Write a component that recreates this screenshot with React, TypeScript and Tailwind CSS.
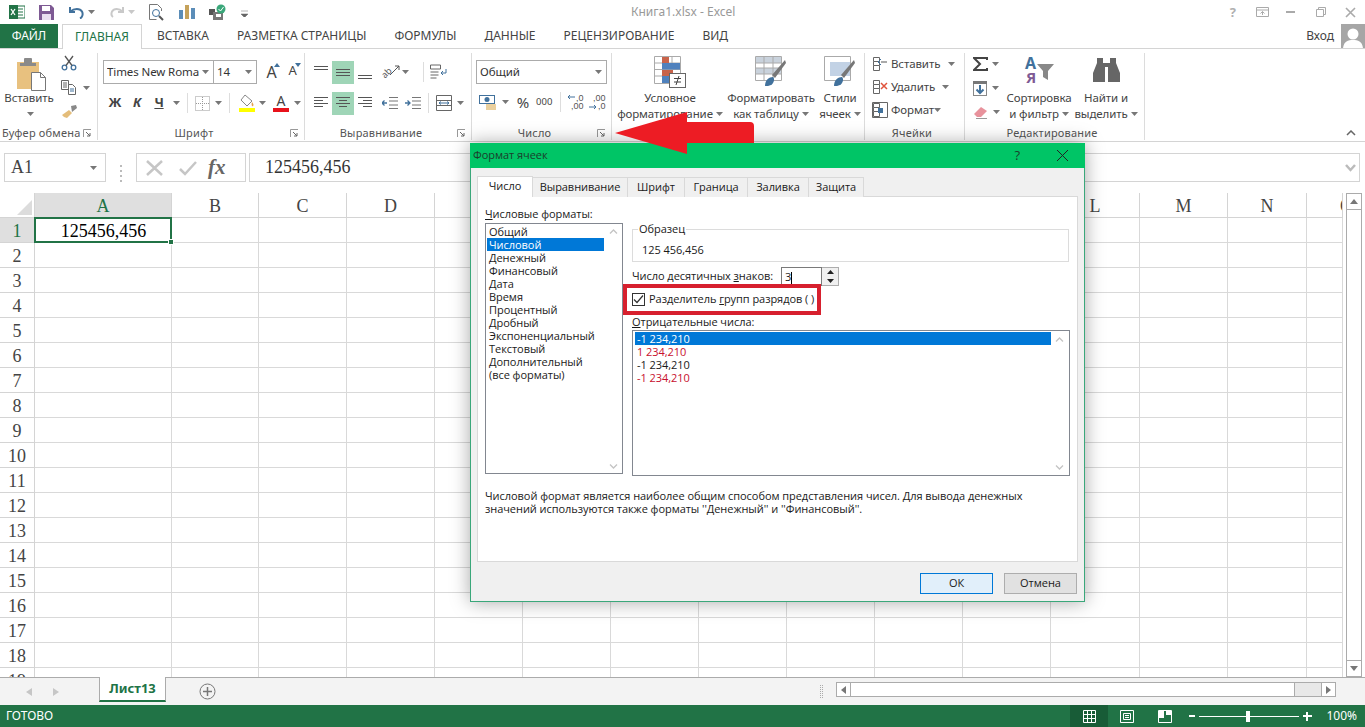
import React from "react";

const Caret = ({ className = "" }: { className?: string }) => (
  <svg width="7" height="4" viewBox="0 0 7 4" className={"shrink-0 " + className}><path d="M0 0h7L3.5 4z" fill="#777" /></svg>
);

const Lines = ({ w, rows, bg = "#555" }: { w: number; rows: [number, number, number][]; bg?: string }) => (
  <svg width={w} height="16" viewBox={`0 0 ${w} 16`} className="shrink-0">
    {rows.map(([x, y, l], i) => <rect key={i} x={x} y={y} width={l} height="1" fill={bg} />)}
  </svg>
);

const Dlauncher = () => (
  <svg width="9" height="9" viewBox="0 0 9 9" className="shrink-0">
    <path d="M.5 8V.5H8" fill="none" stroke="#999" />
    <path d="M3 3l4 4M7 4v3H4" fill="none" stroke="#666" />
  </svg>
);

function Group({ w, label, children, center = true, launcher = false, border = true }: { w: number; label: string; children: React.ReactNode; center?: boolean; launcher?: boolean; border?: boolean }) {
  return (
    <div className={"flex flex-col shrink-0 h-[87px] " + (border ? "border-r border-[#dcdcdc]" : "")} style={{ width: w }}>
      <div className="h-[74px] shrink-0">{children}</div>
      <div className="flex items-center h-[12px] pr-[5px] text-[11px] text-[#555] tracking-[0.2px] whitespace-nowrap">
        <span className={center ? "flex-1 text-center" : "flex-1 pl-[2px]"}>{label}</span>
        {launcher && <Dlauncher />}
      </div>
    </div>
  );
}

const Row = ({ className = "", children }: { className?: string; children: React.ReactNode }) => (
  <div className={"flex items-center " + className}>{children}</div>
);

const Clipboard = () => (
  <svg width="30" height="34" viewBox="0 0 30 34">
    <rect x="0" y="5" width="22" height="27" fill="#e8c17f" />
    <rect x="7" y="1" width="8" height="7" rx="1" fill="#8a8a8a" />
    <rect x="3" y="6" width="16" height="3" fill="#8a8a8a" />
    <path d="M14.5 15.5h9l5 5v13h-14z" fill="#fff" stroke="#777" />
    <path d="M23.5 15.5v5h5" fill="none" stroke="#777" />
  </svg>
);

const Scissors = () => (
  <svg width="16" height="16" viewBox="0 0 16 16" fill="none" stroke="#41719c" strokeWidth="1.3">
    <circle cx="3.5" cy="12.5" r="2.3" /><circle cx="12.5" cy="12.5" r="2.3" />
    <path d="M5 10.5L12 1M11 10.5L4 1" stroke="#555" />
  </svg>
);
const CopyIc = () => (
  <svg width="16" height="15" viewBox="0 0 16 15" fill="none" stroke="#666">
    <path d="M.5.5h7v9h-7zM2 3h4M2 5h4M2 7h4" /><path d="M7.5 4.5h4l3 3v7h-7z" fill="#fff" /><path d="M9 9h4M9 11h4" stroke="#41719c" />
  </svg>
);
const Painter = () => (
  <svg width="17" height="15" viewBox="0 0 17 15"><path d="M10 2l5 -1 1 3-5 4z" fill="#888" /><path d="M1 11l7-5 3 3-5 5-3-1z" fill="#e4bd7a" /></svg>
);
const AUp = ({ big }: { big: boolean }) => (
  <span className="relative flex w-[17px] justify-center text-[#444] leading-none" style={{ fontSize: big ? 16 : 13 }}>
    A<svg width="6" height="4" viewBox="0 0 6 4" className="absolute right-0 top-[-1px]"><path d={big ? "M0 4h6L3 0z" : "M0 0h6L3 4z"} fill="#41719c" /></svg>
  </span>
);
const BordersIc = () => (
  <svg width="15" height="15" viewBox="0 0 15 15" fill="none" stroke="#999" strokeDasharray="1 1"><path d="M.5.5h14v14H.5zM7.5 1v13M1 7.5h13" /></svg>
);
const FillIc = () => (
  <svg width="16" height="18" viewBox="0 0 16 18">
    <path d="M6 1l7 6-5 5-6-6z" fill="#fff" stroke="#888" /><path d="M13 8c1.5 2 2 3 1 4s-2-1-1-4z" fill="#e4a050" />
    <rect x="0" y="14" width="16" height="4" fill="#ffff00" />
  </svg>
);
const FontColorIc = () => (
  <span className="flex flex-col items-center w-[16px]">
    <span className="text-[14px] leading-[14px] text-[#444]">A</span>
    <span className="h-[4px] w-[16px] bg-[#e8121b]" />
  </span>
);
const WrapIc = () => (
  <svg width="18" height="16" viewBox="0 0 18 16" fill="none" stroke="#666"><path d="M.5 1h10v4H.5zM.5 8h8M.5 11h8M.5 14h6" /><path d="M16 5v4h-5M13 7l-2 2 2 2" stroke="#41719c" /></svg>
);
const MergeIc = () => (
  <svg width="16" height="16" viewBox="0 0 16 16" fill="none" stroke="#666"><path d="M.5.5h15v15H.5zM1 5.5h14M1 10.5h14" /><path d="M3 8h10M3 8l2-1.5M3 8l2 1.5M13 8l-2-1.5M13 8l-2 1.5" stroke="#41719c" /></svg>
);
const OrientIc = () => (
  <span className="relative flex w-[19px] h-[16px] items-center">
    <span className="-rotate-45 text-[9px] leading-none text-[#555] tracking-normal">ab</span>
    <svg width="11" height="11" viewBox="0 0 11 11" fill="none" stroke="#555" className="absolute right-0 top-[1px]"><path d="M1 10l9-9M6 1h4v4" /></svg>
  </span>
);
const MoneyIc = () => (
  <svg width="19" height="15" viewBox="0 0 19 15"><rect x=".5" y=".5" width="15" height="8" fill="#fff" stroke="#41719c" /><circle cx="8" cy="4.5" r="2.5" fill="#41719c" /><path d="M7 10h10M7 12h10M7 14h10" stroke="#d6a13c" /></svg>
);
const DecIc = ({ flip }: { flip?: boolean }) => (
  <span className="relative flex flex-col items-end w-[17px] text-[9px] leading-[8px] text-[#555] tracking-normal" style={{ fontFamily: "'Liberation Sans',sans-serif" }}>
    <span>{flip ? ",00" : ",0"}</span><span>{flip ? ",0" : ",00"}</span>
    <svg width="8" height="6" viewBox="0 0 8 6" className={"absolute left-0 " + (flip ? "bottom-0" : "top-0")}><path d={flip ? "M0 3h7M5 1l2 2-2 2" : "M8 3H1M3 1L1 3l2 2"} fill="none" stroke="#41719c" /></svg>
  </span>
);
const CondIc = () => (
  <svg width="32" height="32" viewBox="0 0 32 32">
    <path d="M.5.5h26v27H.5zM9 1v26M18 1v26M1 7h25M1 13.5h25M1 20h25" fill="none" stroke="#aaa" />
    <rect x="8" y="1" width="7" height="6" fill="#c8634a" /><rect x="8" y="7" width="18" height="6.5" fill="#4f81bd" /><rect x="8" y="14" width="11" height="6" fill="#c8634a" /><rect x="8" y="20" width="7" height="7" fill="#4f81bd" />
    <rect x="15.5" y="17.5" width="16" height="14" fill="#fff" stroke="#666" /><path d="M20 22.5h7M20 26h7M25 20l-3 9" fill="none" stroke="#444" />
  </svg>
);
const TableIc = ({ light }: { light?: boolean }) => (
  <svg width="32" height="32" viewBox="0 0 32 32">
    <path d="M.5.5h26v24H.5z" fill="#fff" stroke="#aaa" />
    {light ? <rect x="6" y="6" width="20" height="14" fill="#c2d2e5" /> : <path d="M1 1h25v6H1zM1 12h25v6H1z" fill="#c9d2dc" />}
    {!light && <path d="M9 1v23M18 1v23M1 7h25M1 12h25M1 18h25" stroke="#aaa" />}
    <path d="M17 19L30 4l1 3-11 15z" fill="#777" /><path d="M10 30c0-6 4-9 8-9 2 2 1 6-2 8-2 1-4 1-6 1z" fill="#41719c" />
  </svg>
);
const InsIc = ({ kind }: { kind: number }) => (
  <svg width="16" height="16" viewBox="0 0 16 16" fill="none" stroke="#666">
    <path d="M1.5 1.5h6v4h-6zM1.5 5.5v4h6v-4M1.5 9.5v5h6v-5" />
    {kind === 0 && <><path d="M9 6H15" stroke="#aaa" strokeWidth="2" /><path d="M9 3L6 6l3 3" stroke="#41719c" /></>}
    {kind === 1 && <path d="M9 4l6 6M15 4l-6 6" stroke="#e0533c" strokeWidth="1.5" />}
    {kind === 2 && <><path d="M.5.5h15v15H.5z" /><rect x="6" y="6" width="5" height="5" fill="#41719c" stroke="none" /></>}
  </svg>
);
const SortIc = () => (
  <svg width="32" height="30" viewBox="0 0 32 30"><path d="M14 8h17l-6 7v9l-5-3v-6z" fill="#888" /></svg>
);
const Bino = () => (
  <svg width="27" height="24" viewBox="0 0 27 24" fill="#666"><path d="M4 0h6v5h7V0h6v5l4 10v9H15V9h-3v15H0v-9L4 5z" /><path d="M13 9h1v4h-1z" fill="#fff" /></svg>
);
const Sigma = () => (
  <svg width="15" height="14" viewBox="0 0 15 14"><path d="M14 3V1H1l6 6-6 6h13v-2" fill="none" stroke="#444" strokeWidth="2" /></svg>
);
const FillDown = () => (
  <svg width="14" height="15" viewBox="0 0 14 15"><rect x=".5" y=".5" width="13" height="14" fill="#fff" stroke="#888" /><rect x="0" y="0" width="14" height="3" fill="#777" /><path d="M7 4v8M3.5 8.5L7 12l3.5-3.5" fill="none" stroke="#41719c" strokeWidth="2" /></svg>
);
const Eraser = () => (
  <svg width="15" height="13" viewBox="0 0 15 13"><path d="M1 8l7-7 6 4-6 6H4z" fill="#e8929c" /><path d="M3 12.5h11" stroke="#999" /></svg>
);

const TABS = ["ВСТАВКА", "РАЗМЕТКА СТРАНИЦЫ", "ФОРМУЛЫ", "ДАННЫЕ", "РЕЦЕНЗИРОВАНИЕ", "ВИД"];

function TopBars() {
  return (
    <>
      <div className="h-[24px] relative flex items-center shrink-0">
        <div className="flex items-center pl-[9px] gap-[14px]">
          <svg width="16" height="14" viewBox="0 0 16 14"><rect x="6" y="1" width="10" height="12" fill="#fff" stroke="#217346" /><path d="M9 4h5M9 7h5M9 10h5" stroke="#217346" /><rect width="9" height="14" fill="#217346" /><path d="M2 4l4 6M6 4l-4 6" stroke="#fff" strokeWidth="1.3" /></svg>
          <svg width="15" height="15" viewBox="0 0 15 15"><path d="M0 0h12l3 3v12H0z" fill="#7e5a94" /><rect x="3" y="1" width="8" height="5" fill="#fff" /><rect x="3" y="9" width="9" height="6" fill="#eadff0" /></svg>
          <Row className="gap-[4px] ml-[1px]">
            <svg width="15" height="13" viewBox="0 0 15 13" fill="none"><path d="M1 1v5h5M1.500 5.500C5 2 11 2 13 5.500c1.500 3 0 6-2 7" stroke="#41719c" strokeWidth="2" /></svg>
            <Caret />
          </Row>
          <Row className="gap-[4px] ml-[1px]">
            <svg width="14" height="12" viewBox="0 0 14 12" fill="none"><path d="M13 1v5H8M12.500 5.500C9 2 4 2 2 5.500 1 8 1.500 10 3 11" stroke="#c9c9c9" strokeWidth="2" /></svg>
            <Caret className="opacity-40" />
          </Row>
          <svg width="16" height="17" viewBox="0 0 16 17" fill="none" stroke="#777"><path d="M.5.5h8l4 4V7M.5.5v15h7" /><circle cx="7" cy="9" r="3.500" stroke="#41719c" /><path d="M10 12l4 4" stroke="#555" strokeWidth="2" /></svg>
          <svg width="16" height="14" viewBox="0 0 16 14"><rect x="0" y="5" width="4" height="9" fill="#5b8db8" /><rect x="6" y="0" width="4" height="14" fill="#c5a25b" /><rect x="12" y="3" width="4" height="11" fill="#5b8db8" /></svg>
          <svg width="18" height="17" viewBox="0 0 18 17"><rect x="0" y="5" width="6" height="6" fill="#555" /><rect x="4" y="8" width="10" height="8" fill="#777" /><rect x="7" y="10" width="5" height="3" fill="#fff" /><circle cx="12" cy="5" r="4.500" fill="#3aa77a" /><path d="M9.500 5l2 2 3-4" stroke="#fff" fill="none" /></svg>
          <svg width="7" height="7" viewBox="0 0 7 7" className="mt-[2px]"><path d="M0 1h7M0 4h7L3.500 7.500z" fill="#666" stroke="#666" strokeWidth=".5" /></svg>
        </div>
        <span className="absolute left-[631px] top-[3px] text-[12px] text-[#999]">Книга1.xlsx - Excel</span>
        <div className="ml-auto flex items-center pr-[9px] text-[#b0b0b0]">
          <span className="text-[13px] font-bold leading-none">?</span>
          <svg width="13" height="10" viewBox="0 0 13 10" fill="none" stroke="#aaa" className="ml-[20px]"><path d="M.5.5h12v9H.5zM1 3h11M6.500 8V4.500M4.500 6.500l2-2 2 2" /></svg>
          <svg width="9" height="2" viewBox="0 0 9 2" className="ml-[17px]"><rect width="9" height="2" fill="#aaa" /></svg>
          <svg width="10" height="10" viewBox="0 0 10 10" fill="none" stroke="#aaa" className="ml-[21px]"><path d="M.5 2.500h7v7h-7zM2.500 2V.5h7v7H8" /></svg>
          <svg width="11" height="11" viewBox="0 0 11 11" stroke="#aaa" strokeWidth="1.600" className="ml-[19px]"><path d="M1 1l9 9M10 1l-9 9" /></svg>
        </div>
      </div>
      <div className="h-[25px] flex shrink-0 border-b border-[#d4d4d4] text-[12px] text-[#444]">
        <div className="w-[58px] h-[24px] bg-[#217346] text-white flex items-center justify-center">ФАЙЛ</div>
        <div className="ml-[4px] w-[80px] h-[25px] border border-b-0 border-[#d4d4d4] bg-white flex items-center justify-center text-[#217346] z-10">ГЛАВНАЯ</div>
        <div className="ml-[15px] flex gap-[28px] h-[24px] items-center whitespace-nowrap">
          {TABS.map((t) => <span key={t}>{t}</span>)}
        </div>
        <div className="ml-auto flex items-center h-[24px]">
          <span className="mr-[7px] text-[12px]">Вход</span>
          <svg width="24" height="24" viewBox="0 0 24 24"><rect width="24" height="24" fill="#a6a6a6" /><circle cx="12" cy="10" r="5.500" fill="#fff" /><path d="M2 24c1-7 5-8 10-8s9 1 10 8z" fill="#fff" /></svg>
        </div>
      </div>
    </>
  );
}

const SmallBtn = ({ children, className = "" }: { children: React.ReactNode; className?: string }) => (
  <div className={"flex items-center justify-center " + className}>{children}</div>
);

const selectCls = "flex items-center border border-[#ababab] h-[24px] text-[11.5px] text-[#333]";

function Ribbon() {
  return (
    <div className="h-[93px] shrink-0 border-b border-[#d4d4d4] flex pt-[4px] relative text-[11.5px] tracking-[-0.1px] text-[#444]">
      <Group w={98} label="Буфер обмена" center={false} launcher>
        <div className="flex h-full">
          <div className="w-[58px] flex flex-col items-center pt-[4px] pl-[2px]">
            <span className="ml-[4px] h-[33px]"><Clipboard /></span>
            <span className="leading-[16px] -ml-[2px]">Вставить</span>
            <Caret className="mt-[6px]" />
          </div>
          <div className="flex flex-col pl-[3px] pt-[2px] gap-[9px]">
            <SmallBtn className="w-[16px]"><Scissors /></SmallBtn>
            <Row className="gap-[6px]"><CopyIc /><Caret /></Row>
            <Painter />
          </div>
        </div>
      </Group>
      <Group w={207} label="Шрифт" launcher>
        <div className="pl-[5px] pt-[7px]">
          <Row>
            <div className={selectCls + " w-[111px] pl-[3px] justify-between pr-[4px]"}><span className="overflow-hidden whitespace-nowrap w-[94px]">Times New Roma</span><Caret /></div>
            <div className={selectCls + " w-[44px] -ml-px pl-[3px] justify-between pr-[4px]"}><span>14</span><Caret /></div>
            <div className="flex ml-[6px] gap-[4px]"><AUp big /><AUp big={false} /></div>
          </Row>
          <Row className="mt-[7px] h-[24px]">
            <span className="w-[22px] ml-[1px] text-center font-bold text-[#444] text-[13px]">Ж</span>
            <span className="w-[22px] text-center font-bold italic text-[13px] text-[#444]">К</span>
            <span className="w-[22px] text-center font-bold underline text-[13px] text-[#444]">Ч</span>
            <Caret className="ml-[3px]" />
            <span className="w-px h-[20px] bg-[#ddd] ml-[7px]" />
            <span className="ml-[7px]"><BordersIc /></span>
            <Caret className="ml-[5px]" />
            <span className="w-px h-[20px] bg-[#ddd] ml-[7px]" />
            <span className="ml-[9px]"><FillIc /></span>
            <Caret className="ml-[4px]" />
            <span className="ml-[7px]"><FontColorIc /></span>
            <Caret className="ml-[5px]" />
          </Row>
        </div>
      </Group>
      <Group w={167} label="Выравнивание" launcher>
        <div className="pl-[5px] pt-[7px]">
          <Row className="h-[24px]">
            <SmallBtn className="w-[22px] h-[23px]"><Lines w={14} rows={[[0, 2, 14], [0, 5, 14]]} /></SmallBtn>
            <SmallBtn className="w-[22px] h-[23px] bg-[#9fd5b7]"><Lines w={14} rows={[[0, 5, 14], [0, 8, 14], [0, 11, 14]]} /></SmallBtn>
            <SmallBtn className="w-[22px] h-[23px]"><Lines w={14} rows={[[0, 11, 14], [0, 14, 14]]} /></SmallBtn>
            <span className="ml-[5px]"><OrientIc /></span>
            <Caret className="ml-[2px]" />
            <span className="w-px h-[20px] bg-[#ddd] ml-[14px]" />
            <span className="ml-[6px]"><WrapIc /></span>
          </Row>
          <Row className="mt-[7px] h-[24px]">
            <SmallBtn className="w-[22px] h-[23px]"><Lines w={14} rows={[[0, 2, 14], [0, 5, 9], [0, 8, 14], [0, 11, 9]]} /></SmallBtn>
            <SmallBtn className="w-[22px] h-[23px] bg-[#9fd5b7]"><Lines w={14} rows={[[0, 2, 14], [3, 5, 8], [0, 8, 14], [3, 11, 8]]} /></SmallBtn>
            <SmallBtn className="w-[22px] h-[23px]"><Lines w={14} rows={[[0, 2, 14], [5, 5, 9], [0, 8, 14], [5, 11, 9]]} /></SmallBtn>
            <svg width="16" height="12" viewBox="0 0 16 12" fill="none" className="ml-[6px]" stroke="#777"><path d="M7 .5h9M7 4h9M7 8h9M7 11.500h9" /><path d="M5 6H0M2.500 3.500L0 6l2.500 2.500" stroke="#41719c" strokeWidth="1.300" /></svg>
            <svg width="16" height="12" viewBox="0 0 16 12" fill="none" className="ml-[7px]" stroke="#777"><path d="M7 .5h9M7 4h9M7 8h9M7 11.500h9" /><path d="M0 6h5M2.500 3.500L5 6 2.500 8.500" stroke="#41719c" strokeWidth="1.300" /></svg>
            <span className="w-px h-[20px] bg-[#ddd] ml-[7px]" />
            <span className="ml-[7px]"><MergeIc /></span>
            <Caret className="ml-[5px]" />
          </Row>
        </div>
      </Group>
      <Group w={140} label="Число" launcher>
        <div className="pl-[4px] pt-[7px]">
          <div className={selectCls + " w-[131px] pl-[3px] pr-[4px] justify-between"}><span>Общий</span><Caret /></div>
          <Row className="mt-[6px] h-[24px] pl-[3px]">
            <MoneyIc />
            <Caret className="ml-[4px]" />
            <span className="ml-[7px] text-[15px] leading-none w-[14px] text-center">%</span>
            <span className="ml-[6px] text-[9.500px] text-[#444] tracking-[0.1px]">000</span>
            <span className="w-px h-[20px] bg-[#ddd] ml-[7px]" />
            <span className="ml-[6px]"><DecIc /></span>
            <span className="ml-[5px]"><DecIc flip /></span>
          </Row>
        </div>
      </Group>
      <Group w={253} label="Стили">
        <div className="flex pt-[3px] text-center leading-[16px]">
          <div className="w-[104px] ml-[6px] flex flex-col items-center"><CondIc /><span className="mt-[2px]">Условное</span><span className="flex items-center gap-[3px] whitespace-nowrap">форматирование<Caret /></span></div>
          <div className="w-[92px] ml-[3px] flex flex-col items-center"><TableIc /><span className="mt-[2px] whitespace-nowrap">Форматировать</span><span className="flex items-center gap-[3px] whitespace-nowrap">как таблицу<Caret /></span></div>
          <div className="w-[44px] ml-[1px] flex flex-col items-center"><TableIc light /><span className="mt-[2px]">Стили</span><span className="flex items-center gap-[3px]">ячеек<Caret /></span></div>
        </div>
      </Group>
      <Group w={100} label="Ячейки">
        <div className="flex flex-col pl-[7px] pt-[3px] gap-[7px]">
          <Row className="h-[16px]"><InsIc kind={0} /><span className="ml-[3px] w-[48px]">Вставить</span><Caret className="ml-[9px]" /></Row>
          <Row className="h-[16px]"><InsIc kind={1} /><span className="ml-[3px] w-[46px]">Удалить</span><Caret className="ml-[5px]" /></Row>
          <Row className="h-[16px]"><InsIc kind={2} /><span className="ml-[3px] w-[42px]">Формат</span><Caret className="ml-[1px]" /></Row>
        </div>
      </Group>
      <Group w={180} label="Редактирование" border>
        <div className="flex">
          <div className="w-[36px] pl-[8px] pt-[3px] flex flex-col gap-[8px]">
            <Row className="gap-[4px] h-[16px]"><Sigma /><Caret /></Row>
            <Row className="gap-[5px] h-[16px]"><FillDown /><Caret /></Row>
            <Row className="gap-[5px] h-[16px]"><Eraser /><Caret /></Row>
          </div>
          <div className="w-[68px] ml-[4px] flex flex-col items-center text-center leading-[16px] whitespace-nowrap pt-[3px]">
            <div className="relative h-[32px] w-[32px]">
              <SortIc />
              <span className="absolute left-[2px] top-[0px] text-[16px] font-bold leading-[14px] text-[#41719c]">А</span>
              <span className="absolute left-[3px] top-[14px] text-[15px] font-bold leading-[14px] text-[#7e5a94]">Я</span>
            </div>
            <span className="mt-[2px]">Сортировка</span>
            <span className="flex items-center gap-[3px]">и фильтр<Caret /></span>
          </div>
          <div className="w-[66px] flex flex-col items-center text-center leading-[16px] whitespace-nowrap pt-[3px]">
            <div className="h-[32px] flex items-start pt-[2px]"><Bino /></div>
            <span className="mt-[2px]">Найти и</span>
            <span className="flex items-center gap-[3px]">выделить<Caret /></span>
          </div>
        </div>
      </Group>
      <div className="flex-1 flex items-end justify-end pr-[9px] pb-[5px]">
        <svg width="10" height="6" viewBox="0 0 10 6" fill="none" stroke="#666" strokeWidth="1.500"><path d="M1 5l4-4 4 4" /></svg>
      </div>
    </div>
  );
}

const COLS: [string, number][] = [["A", 137], ["B", 87], ["C", 88], ["D", 88], ["E", 88], ["F", 88], ["G", 88], ["H", 88], ["I", 88], ["J", 88], ["K", 88], ["L", 89], ["M", 88], ["N", 79], ["O", 36]];

function FormulaBar() {
  return (
    <div className="h-[51px] shrink-0 pt-[11px] pl-[4px] pr-[5px] flex" style={{ fontFamily: "'Liberation Serif',serif" }}>
      <div className="w-[102px] h-[29px] border border-[#d4d4d4] flex items-center justify-between pl-[6px] pr-[8px] text-[18px] text-[#444]"><span>A1</span><Caret /></div>
      <div className="w-[30px] flex flex-col justify-center items-center gap-[3px]">
        <span className="w-[2px] h-[2px] bg-[#bbb]" /><span className="w-[2px] h-[2px] bg-[#bbb]" /><span className="w-[2px] h-[2px] bg-[#bbb]" /><span className="w-[2px] h-[2px] bg-[#bbb]" />
      </div>
      <div className="w-[110px] h-[29px] border border-[#d4d4d4] flex items-center pl-[8px] shrink-0">
        <svg width="19" height="16" viewBox="0 0 19 16" stroke="#c6c6c6" strokeWidth="2.500"><path d="M2 1l15 14M17 1L2 15" /></svg>
        <svg width="20" height="16" viewBox="0 0 20 16" fill="none" stroke="#c6c6c6" strokeWidth="2.500" className="ml-[14px]"><path d="M2 9l5 5L18 2" /></svg>
        <span className="ml-[10px] text-[21px] italic font-bold leading-none text-[#666]">fx</span>
      </div>
      <div className="flex-1 ml-[3px] h-[29px] border border-[#d4d4d4] flex items-center justify-between pl-[15px] pr-[3px] text-[18px] text-[#333]">
        <span>125456,456</span>
        <svg width="11" height="8" viewBox="0 0 11 8" fill="none" stroke="#bbb" strokeWidth="2.500"><path d="M1 1l4.500 5L10 1" /></svg>
      </div>
    </div>
  );
}

function Sheet() {
  const rows = Array.from({ length: 19 }, (_, i) => i + 1);
  return (
    <div className="flex-1 min-h-0 flex overflow-hidden" style={{ fontFamily: "'Liberation Serif',serif" }}>
      <div className="w-[1343px] shrink-0 overflow-hidden">
        <div className="flex h-[25px]">
          <div className="w-[35px] shrink-0 border-r border-b border-[#d4d4d4] flex items-end justify-end p-[2px]">
            <svg width="15" height="15" viewBox="0 0 15 15"><path d="M15 0v15H0z" fill="#dcdcdc" /></svg>
          </div>
          {COLS.map(([c, w], i) => (
            <div key={c} className={"shrink-0 flex items-center pt-[2px] text-[18px] border-b border-r border-[#d4d4d4] overflow-hidden " + (c === "O" ? "justify-start pl-[33px] " : "justify-center ") + (i === 0 ? "bg-[#dfdfdf] text-[#217346] border-b-[#9a9a9a]" : "text-[#444]")} style={{ width: w }}>{c}</div>
          ))}
        </div>
        {rows.map((r) => (
          <div key={r} className="flex h-[25px]">
            <div className={"w-[35px] shrink-0 text-center border-r border-b border-[#d4d4d4] text-[18px] leading-[24px] pt-px " + (r === 1 ? "bg-[#dfdfdf] text-[#217346]" : "text-[#444]")}>{r}</div>
            {COLS.map(([c, w], i) => (
              <div key={c} className="shrink-0 border-r border-b border-[#d9d9d9] relative" style={{ width: w }}>
                {r === 1 && i === 0 && (
                  <div className="absolute -inset-px border-2 border-[#217346] flex items-center justify-center pt-[3px] pl-[1px] text-[18px] text-black z-10">
                    125456,456
                    <span className="absolute right-[-4px] bottom-[-4px] w-[6px] h-[6px] bg-[#217346] border border-white" />
                  </div>
                )}
              </div>
            ))}
          </div>
        ))}
      </div>
      <div className="ml-[3px] w-[16px] h-full flex flex-col justify-between border border-[#ababab]">
        <div className="h-[16px] flex items-center justify-center border-b border-[#ababab]"><svg width="8" height="5" viewBox="0 0 8 5"><path d="M0 5h8L4 0z" fill="#777" /></svg></div>
        <div className="h-[16px] flex items-center justify-center border-t border-[#ababab]"><svg width="8" height="5" viewBox="0 0 8 5"><path d="M0 0h8L4 5z" fill="#777" /></svg></div>
      </div>
    </div>
  );
}

function SheetBar() {
  return (
    <div className="h-[28px] shrink-0 bg-[#f3f3f3] border-t border-[#ababab] flex text-[#444]">
      <div className="w-[99px] flex items-center pl-[26px] gap-[21px] shrink-0">
        <svg width="6" height="8" viewBox="0 0 6 8"><path d="M6 0v8L0 4z" fill="#c6c6c6" /></svg>
        <svg width="6" height="8" viewBox="0 0 6 8"><path d="M0 0v8l6-4z" fill="#c6c6c6" /></svg>
      </div>
      <div className="w-[67px] h-[25px] -mt-px bg-white border-x border-[#ababab] border-b-2 border-b-[#217346] flex items-center justify-center text-[13px] font-bold text-[#217346] whitespace-nowrap">Лист13</div>
      <svg width="17" height="17" viewBox="0 0 17 17" fill="none" stroke="#777" className="ml-[33px] mt-[5px]"><circle cx="8.500" cy="8.500" r="7.500" /><path d="M8.500 4v9M4 8.500h9" strokeWidth="1.500" /></svg>
      <div className="w-[3px] h-[13px] ml-[604px] mt-[7px] border-x border-dotted border-[#aaa]" />
      <div className="ml-[13px] mt-[4px] w-[500px] h-[15px] flex border border-[#ababab] bg-[#e8e8e8]">
        <div className="w-[14px] h-full flex items-center justify-center bg-white border-r border-[#ababab]"><svg width="5" height="8" viewBox="0 0 5 8"><path d="M5 0v8L0 4z" fill="#777" /></svg></div>
        <div className="w-[444px] h-full bg-white border-r border-[#ababab]" />
        <div className="flex-1" />
        <div className="w-[14px] h-full flex items-center justify-center bg-white border-l border-[#ababab]"><svg width="5" height="8" viewBox="0 0 5 8"><path d="M0 0v8l5-4z" fill="#777" /></svg></div>
      </div>
    </div>
  );
}

function StatusBar() {
  return (
    <div className="h-[22px] shrink-0 bg-[#217346] text-white flex items-center text-[12px]">
      <span className="pl-[6px]">ГОТОВО</span>
      <div className="ml-auto flex items-center h-full">
        <div className="w-[38px] h-full bg-[#185c37] flex items-center justify-center">
          <svg width="13" height="13" viewBox="0 0 13 13" fill="none" stroke="#fff"><path d="M.5.5h12v12H.5zM4.500 1v11M8.500 1v11M1 4.500h11M1 8.500h11" /></svg>
        </div>
        <svg width="14" height="13" viewBox="0 0 14 13" fill="none" stroke="#fff" className="ml-[12px]"><path d="M.5.5h13v12H.5zM3.500 3.500h7v6h-7zM5 5.500h4M5 7.500h4" /></svg>
        <svg width="14" height="13" viewBox="0 0 14 13" className="ml-[24px]"><path d="M.5.5h13v12H.5z" fill="none" stroke="#fff" /><path d="M1 1h5v7H1zM8 1h5v4H8z" fill="#fff" /></svg>
        <div className="ml-[17px] flex items-center">
          <span className="w-[6px] h-[2px] bg-white" />
          <span className="relative ml-[4px] w-[100px] h-px bg-white"><span className="absolute left-[47px] top-[-5px] w-[4px] h-[11px] bg-white" /></span>
          <span className="relative ml-[4px] w-[9px] h-[9px]"><span className="absolute left-0 top-[3px] w-[9px] h-[2px] bg-white" /><span className="absolute left-[3px] top-0 w-[2px] h-[9px] bg-white" /></span>
        </div>
        <span className="ml-[14px] pr-[8px] text-[12px]">100%</span>
      </div>
    </div>
  );
}

const FORMATS = ["Общий", "Числовой", "Денежный", "Финансовый", "Дата", "Время", "Процентный", "Дробный", "Экспоненциальный", "Текстовый", "Дополнительный", "(все форматы)"];
const DTABS = ["Выравнивание", "Шрифт", "Граница", "Заливка", "Защита"];
const DTW = [95, 57, 63, 61, 55];

const ArrowBtn = ({ d }: { d: "up" | "down" }) => (
  <svg width="9" height="5" viewBox="0 0 9 5" fill="none" stroke="#c4c4c4" strokeWidth="1.300"><path d={d === "up" ? "M1 4.500L4.500 1 8 4.500" : "M1 .5L4.500 4 8 .5"} /></svg>
);

function Dialog() {
  return (
    <div className="absolute left-[470px] top-[143px] w-[615px] h-[459px] flex flex-col bg-[#f0f0f0] border border-[#3aa77a] shadow-[0_0_18px_rgba(0,0,0,0.35)] z-20 text-[11px] tracking-[-0.05px] text-[#1a1a1a]" style={{ fontFamily: "'Open Sans','Noto Sans',sans-serif" }}>
      <div className="h-[25px] shrink-0 bg-[#00c566] flex items-center pl-[3px] pr-[17px] -mx-px -mt-px">
        <span className="text-[11px] text-[#1c3d2c]">Формат ячеек</span>
        <span className="ml-auto text-[13px] text-[#1c3d2c]">?</span>
        <svg width="11" height="11" viewBox="0 0 11 11" stroke="#222" className="ml-[37px]"><path d="M0 0l11 11M11 0L0 11" /></svg>
      </div>
      <div className="px-[6px] pt-[9px] flex flex-col flex-1">
        <div className="flex h-[20px] items-end relative z-10">
          <div className="h-[21px] w-[56px] bg-white border border-b-0 border-[#d9d9d9] flex items-center justify-center pb-[2px]">Число</div>
          {DTABS.map((t, i) => (
            <div key={t} className="h-[20px] bg-[#f0f0f0] border border-b-0 border-l-0 border-[#d9d9d9] flex items-center justify-center shrink-0" style={{ width: DTW[i] }}>{t}</div>
          ))}
        </div>
        <div className="h-[366px] -mt-px bg-white border border-[#d9d9d9] pl-[7px] pr-[6px] pt-[9px]">
          <div className="flex">
            <div className="w-[138px] shrink-0">
              <div className="h-[16px] leading-[16px]"><u>Ч</u>исловые форматы:</div>
              <div className="mt-[1px] h-[251px] border border-[#828790] pl-[1px] pt-[1px] relative">
                {FORMATS.map((f, i) => (
                  <div key={f} className={"h-[13px] leading-[13px] w-[117px] pl-[2px] " + (i === 1 ? "bg-[#0078d7] text-white" : "")}>{f}</div>
                ))}
                <div className="absolute right-[4px] top-[5px]"><ArrowBtn d="up" /></div>
                <div className="absolute right-[4px] bottom-[4px]"><ArrowBtn d="down" /></div>
              </div>
            </div>
            <div className="ml-[9px] flex-1">
              <div className="mt-[23px] w-[437px] h-[33px] border border-[#dcdcdc] relative pl-[9px] pt-[12px] leading-[16px]">
                <span className="absolute left-[5px] top-[-8px] bg-white px-[1px] leading-[14px]">Образец</span>
                125 456,456
              </div>
              <div className="flex items-center mt-[5px] h-[19px]">
                <span className="w-[149px] whitespace-nowrap">Число десятичных <u>з</u>наков:</span>
                <div className="w-[41px] h-[19px] border border-[#7a7a7a] pl-[3px] leading-[17px]">3<span className="inline-block w-px h-[12px] bg-black align-middle" /></div>
                <div className="w-[17px] h-[19px] border border-l-0 border-[#adadad] bg-[#f0f0f0] flex flex-col items-center justify-around">
                  <svg width="7" height="4" viewBox="0 0 7 4"><path d="M0 4h7L3.500 0z" fill="#222" /></svg>
                  <svg width="7" height="4" viewBox="0 0 7 4"><path d="M0 0h7L3.500 4z" fill="#222" /></svg>
                </div>
              </div>
              <div className="-mt-[2px] -ml-[9px] w-[198px] h-[31px] border-[4px] border-[#d7202e] flex items-center pl-[5px] relative">
                <span className="w-[13px] h-[13px] border border-[#333] flex items-center justify-center">
                  <svg width="11" height="9" viewBox="0 0 11 9" fill="none" stroke="#333" strokeWidth="1.200"><path d="M1 4.500l3 3 6-7" /></svg>
                </span>
                <span className="ml-[4px] whitespace-nowrap">Разделитель <u>г</u>рупп разрядов ( )</span>
              </div>
              <div className="h-[14px] leading-[14px]"><u>О</u>трицательные числа:</div>
              <div className="mt-[1px] w-[438px] h-[146px] border border-[#828790] pl-[2px] pt-[1px] relative">
                <div className="h-[13px] leading-[13px] w-[416px] pl-[2px] bg-[#0078d7] text-white">-1 234,210</div>
                <div className="h-[13px] leading-[13px] pl-[2px] text-[#c8102e]">1 234,210</div>
                <div className="h-[13px] leading-[13px] pl-[2px]">-1 234,210</div>
                <div className="h-[13px] leading-[13px] pl-[2px] text-[#c8102e]">-1 234,210</div>
                <div className="absolute right-[5px] top-[6px]"><ArrowBtn d="up" /></div>
                <div className="absolute right-[5px] bottom-[5px]"><ArrowBtn d="down" /></div>
              </div>
            </div>
          </div>
          <div className="mt-[13px] leading-[13px]">
            <div className="whitespace-nowrap">Числовой формат является наиболее общим способом представления чисел. Для вывода денежных</div>
            <div className="whitespace-nowrap">значений используются также форматы ''Денежный'' и ''Финансовый''.</div>
          </div>
        </div>
        <div className="flex justify-end gap-[11px] mt-[11px] pr-[1px]">
          <div className="w-[73px] h-[21px] border border-[#0078d7] bg-[#e1effa] flex items-center justify-center">ОК</div>
          <div className="w-[73px] h-[21px] border border-[#adadad] bg-[#e1e1e1] flex items-center justify-center">Отмена</div>
        </div>
      </div>
    </div>
  );
}

export default function App() {
  return (
    <div className="relative w-[1365px] h-[727px] overflow-hidden bg-white flex flex-col" style={{ fontFamily: "'Noto Sans','Open Sans',sans-serif" }}>
      <TopBars />
      <Ribbon />
      <FormulaBar />
      <Sheet />
      <SheetBar />
      <StatusBar />
      <Dialog />
      <svg width="142" height="44" viewBox="0 0 142 44" className="absolute left-[614px] top-[111px] z-30">
        <path d="M1 22L73 1v10h63q4 0 4 4v17H73v11z" fill="#ed1c24" />
      </svg>
    </div>
  );
}
